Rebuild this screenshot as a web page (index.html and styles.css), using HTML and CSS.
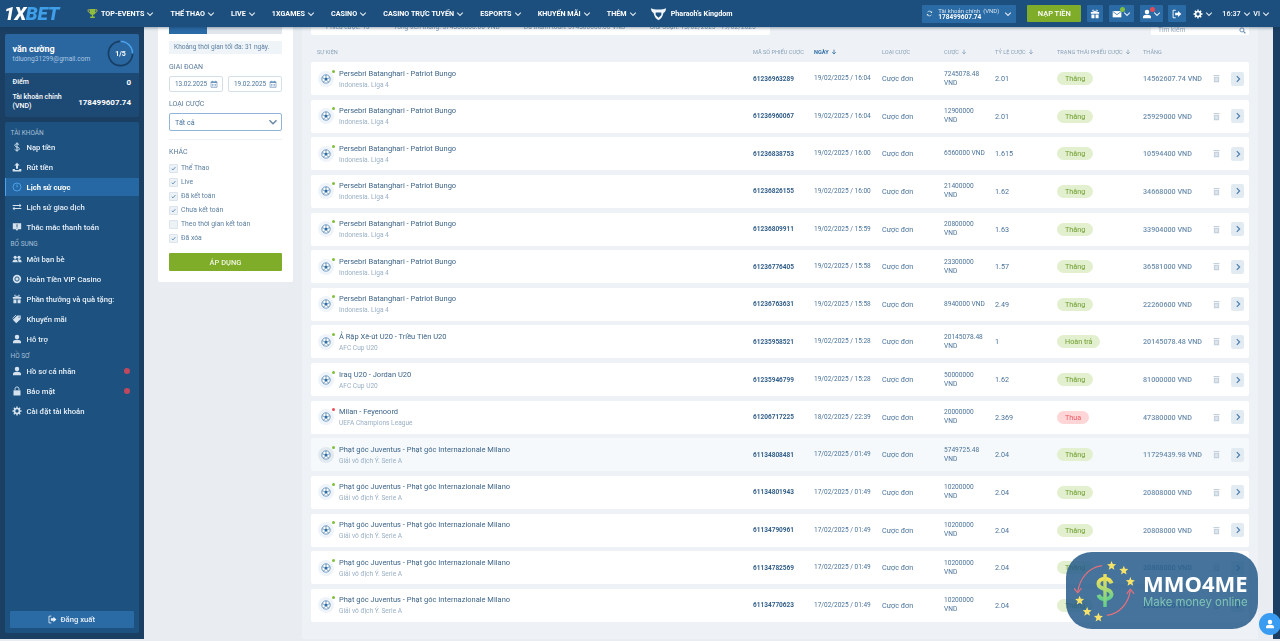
FILE: index.html
```html
<!DOCTYPE html>
<html lang="vi">
<head>
<meta charset="utf-8">
<title>1XBET - Lịch sử cược</title>
<link rel="stylesheet" href="styles.css">
</head>
<body>
<svg class="defs" width="0" height="0" aria-hidden="true">
  <symbol id="chev" viewBox="0 0 10 10"><path d="M1.5 3.2 5 6.8l3.5-3.6" fill="none" stroke="currentColor" stroke-width="1.4"/></symbol>
  <symbol id="dollar" viewBox="0 0 12 12"><path d="M8.6 3.4C8 2.500 7 2.100 6 2.100c-1.500 0-2.600.8-2.600 2 0 2.800 5.400 1.300 5.400 3.900 0 1.200-1.200 2-2.800 2-1.200 0-2.300-.5-2.900-1.500M6 .5v11" fill="none" stroke="currentColor" stroke-width="1.200"/></symbol>
  <symbol id="upload" viewBox="0 0 12 12"><path d="M6 .8 9.300 4.300H7.200V8H4.800V4.300H2.700zM.8 8.500h2.700v1h5V8.500h2.700v2.800H.8z" fill="currentColor"/></symbol>
  <symbol id="clock" viewBox="0 0 12 12"><circle cx="6" cy="6" r="4.800" fill="none" stroke="currentColor" stroke-width="1.100"/><path d="M6 3v3.500" stroke="currentColor" stroke-width="1.200"/></symbol>
  <symbol id="swap" viewBox="0 0 12 12"><path d="M.8 3.500h8.200V1.800L11.300 4.200 9 6.500V4.800H.8zM11.200 8.500H3v1.700L.7 7.800 3 5.500v1.700h8.200z" fill="currentColor"/></symbol>
  <symbol id="ask" viewBox="0 0 12 12"><path d="M1 1.500h10v7.200H7.500L6 10.800 4.500 8.700H1z" fill="currentColor"/><path d="M6 2.800v3M6 6.700v1" stroke="#1d5280" stroke-width="1.100"/></symbol>
  <symbol id="users" viewBox="0 0 12 12"><circle cx="3.800" cy="4" r="1.900" fill="currentColor"/><circle cx="8.400" cy="4" r="1.900" fill="currentColor"/><path d="M.6 10c0-2.500 1.300-3.500 3.200-3.500S7 7.500 7 10zM7.800 10c0-1.500-.3-2.600-1-3.300.5-.2 1-.3 1.600-.3 1.900 0 3.100 1 3.100 3.600z" fill="currentColor"/></symbol>
  <symbol id="coin" viewBox="0 0 12 12"><circle cx="6" cy="6" r="5" fill="currentColor"/><circle cx="6" cy="6" r="2.500" fill="none" stroke="#1d5280" stroke-width="1.100"/></symbol>
  <symbol id="gift" viewBox="0 0 12 12"><path d="M1 3.500h10v2.200H1zM1.700 6.500h3.600v4.700H1.700zM6.700 6.500h3.600v4.700H6.700zM5.300 3.500h1.400v2.200H5.300z" fill="currentColor"/><path d="M6 3.300C4.500.8 2.800 1 3 2.300c.2 1 1.800 1 3 1zm0 0c1.500-2.500 3.200-2.300 3-1-.2 1-1.800 1-3 1z" fill="none" stroke="currentColor"/></symbol>
  <symbol id="tag" viewBox="0 0 12 12"><path d="M6.200 1.800h4.200V6l-5.300 5L1 7z" fill="currentColor"/><path d="M4.800 1.200.6 5.300" stroke="currentColor"/><circle cx="8.500" cy="3.700" r=".8" fill="#1d5280"/></symbol>
  <symbol id="user" viewBox="0 0 12 12"><circle cx="6" cy="3.500" r="2.700" fill="currentColor"/><path d="M1.200 11.200V9.500c0-1.800 1.800-2.700 4.800-2.700s4.800.9 4.800 2.700v1.700z" fill="currentColor"/></symbol>
  <symbol id="lock" viewBox="0 0 12 12"><path d="M1.800 5.200h8.400v6.200H1.800z" fill="currentColor"/><path d="M3.600 5.200V3.500a2.400 2.400 0 0 1 4.800 0v1.700" fill="none" stroke="currentColor" stroke-width="1.100"/></symbol>
  <symbol id="gear" viewBox="0 0 12 12"><circle cx="6" cy="6" r="3" fill="none" stroke="currentColor" stroke-width="2"/><path d="M6 .6v2M6 9.400v2M.6 6h2M9.400 6h2M2.200 2.200l1.400 1.400M8.400 8.400l1.400 1.400M2.200 9.800l1.400-1.400M8.400 3.600l1.400-1.400" stroke="currentColor" stroke-width="1.700"/></symbol>
  <symbol id="logout" viewBox="0 0 12 12"><path d="M4.500 1.500H1.300v9h3.200" fill="none" stroke="currentColor" stroke-width="1.100"/><path d="M3.800 4.400h3.400V2.300L11.200 6 7.200 9.700V7.600H3.800z" fill="currentColor"/></symbol>
  <symbol id="trash" viewBox="0 0 12 12"><path d="M2 1.300h8v1.500H2zM2.500 3.500h7v7.500h-7z" fill="currentColor"/><path d="M4.500 5v4.500M6 5v4.500M7.500 5v4.500" stroke="#fff" stroke-width=".6"/></symbol>
  <symbol id="next" viewBox="0 0 10 10"><path d="M3.500 1.500 7 5 3.500 8.500" fill="none" stroke="currentColor" stroke-width="1.500"/></symbol>
  <symbol id="ball" viewBox="0 0 12 12"><circle cx="6" cy="6" r="5" fill="#fff" stroke="#2f6da6" stroke-width=".8"/><path d="M6 3.800 8.100 5.300 7.300 7.800H4.700L3.900 5.300z" fill="#2f6da6"/><path d="M6 1v2.800M1.500 4.600l2.400.7M10.500 4.600l-2.400.7M3 10l1.700-2.200M9 10 7.300 7.800" stroke="#2f6da6" stroke-width=".8"/></symbol>
  <symbol id="cal" viewBox="0 0 12 12"><path d="M1.500 2.500h9v8.500h-9z" fill="none" stroke="currentColor"/><path d="M1.500 2.500h9v2h-9zM3.200 1h1v2h-1zM7.800 1h1v2h-1z" fill="currentColor"/><path d="M3 6h1.500v1H3zM5.300 6h1.500v1H5.300zM7.600 6h1.500v1H7.600zM3 8.200h1.500v1H3zM5.300 8.200h1.500v1H5.300zM7.600 8.200h1.500v1H7.600z" fill="currentColor"/></symbol>
  <symbol id="tick" viewBox="0 0 10 10"><path d="M2.500 5.300 4.300 7l3.400-4" fill="none" stroke="#2f6da6" stroke-width="1"/></symbol>
  <symbol id="search" viewBox="0 0 12 12"><circle cx="5" cy="5" r="3.500" fill="none" stroke="currentColor" stroke-width="1.500"/><path d="m7.600 7.600 3.400 3.400" stroke="currentColor" stroke-width="1.800"/></symbol>
  <symbol id="refresh" viewBox="0 0 12 12"><path d="M9.800 4.500A4 4 0 0 0 2.500 4M2.200 7.500A4 4 0 0 0 9.500 8" fill="none" stroke="currentColor" stroke-width="1.100"/><path d="m10.500 2-.2 3-2.800-.6zM1.500 10l.2-3 2.800.6z" fill="currentColor"/></symbol>
  <symbol id="down" viewBox="0 0 10 10"><path d="M5 1v7M2 5.200 5 8.400l3-3.200" fill="none" stroke="currentColor" stroke-width="1.300"/></symbol>
  <symbol id="mail" viewBox="0 0 12 12"><path d="M.8 2.500h10.400v7.500H.8z" fill="currentColor"/><path d="M1 3 6 6.800 11 3" fill="none" stroke="#2a6aa5" stroke-width=".9"/></symbol>
  <symbol id="trophy" viewBox="0 0 12 12"><path d="M3 1h6v3.500a3 3 0 0 1-6 0zM5.300 7.200h1.400v2H5.300zM3.500 9.300h5v1.700h-5z" fill="#8fbf3a"/><path d="M3 2H1c0 2 .8 3 2.300 3.300M9 2h2c0 2-.8 3-2.300 3.300" fill="none" stroke="#d6c84a" stroke-width=".8"/></symbol>
  <symbol id="pharaoh" viewBox="0 0 18 14"><path d="M1 1c2 .8 3.300 1.300 8 1.300S15 1.800 17 1c-.2 2.600-1 4-2.800 5-.6 3.500-2.500 6.500-5.200 7.500C6.300 12.500 4.400 9.500 3.800 6 2 5 1.200 3.600 1 1z" fill="#f2f6fa"/><path d="M6 5.500h6v2.500L9 11 6 8z" fill="#1c4f7e"/></symbol>
  <symbol id="star" viewBox="0 0 10 10"><path d="m5 0 1.300 3.300 3.500.3-2.700 2.300.9 3.500L5 7.500 2 9.400l.9-3.500L.2 3.600l3.500-.3z" fill="#f7e36a"/></symbol>
</svg>

<div class="app">
  <header class="topbar">
    <a class="logo"><span>1X</span><b>BET</b></a>
    <nav class="nav">
      <a class="nav-item"><svg class="ic-trophy"><use href="#trophy"/></svg>TOP-EVENTS<svg class="chev"><use href="#chev"/></svg></a>
      <a class="nav-item">THỂ THAO<svg class="chev"><use href="#chev"/></svg></a>
      <a class="nav-item">LIVE<svg class="chev"><use href="#chev"/></svg></a>
      <a class="nav-item">1XGAMES<svg class="chev"><use href="#chev"/></svg></a>
      <a class="nav-item">CASINO<svg class="chev"><use href="#chev"/></svg></a>
      <a class="nav-item">CASINO TRỰC TUYẾN<svg class="chev"><use href="#chev"/></svg></a>
      <a class="nav-item">ESPORTS<svg class="chev"><use href="#chev"/></svg></a>
      <a class="nav-item">KHUYẾN MÃI<svg class="chev"><use href="#chev"/></svg></a>
      <a class="nav-item">THÊM<svg class="chev"><use href="#chev"/></svg></a>
    </nav>
    <a class="promo"><svg class="ic-pharaoh"><use href="#pharaoh"/></svg>Pharaoh's Kingdom</a>
    <div class="tools">
      <div class="wallet">
        <svg class="ic-sm"><use href="#refresh"/></svg>
        <div class="wallet-text"><span>Tài khoản chính&nbsp; (VND)</span><b>178499607.74</b></div>
        <svg class="chev"><use href="#chev"/></svg>
      </div>
      <a class="deposit">NẠP TIỀN</a>
      <a class="tool tool-gift"><svg class="ic-md"><use href="#gift"/></svg></a>
      <a class="tool tool-mail"><svg class="ic-md"><use href="#mail"/></svg><i class="badge-green"></i><svg class="chev"><use href="#chev"/></svg></a>
      <a class="tool tool-user"><svg class="ic-md"><use href="#user"/></svg><i class="badge-red"></i><svg class="chev"><use href="#chev"/></svg></a>
      <a class="tool tool-out"><svg class="ic-md"><use href="#logout"/></svg></a>
      <a class="plain plain-gear"><svg class="ic-md"><use href="#gear"/></svg><svg class="chev"><use href="#chev"/></svg></a>
      <a class="plain plain-time">16:37<svg class="chev"><use href="#chev"/></svg></a>
      <a class="plain plain-lang">VI<svg class="chev"><use href="#chev"/></svg></a>
    </div>
  </header>

  <div class="body">
    <aside class="sidebar">
      <section class="profile">
        <div class="profile-top">
          <div><div class="pname">văn cường</div><div class="pmail">tdluong31299@gmail.com</div></div>
          <div class="ring"><svg viewBox="0 0 28 28"><circle cx="14" cy="14" r="12.500" fill="none" stroke="#173f66" stroke-width="1.800"/><path d="M14 1.500A12.500 12.500 0 0 1 26.500 14" fill="none" stroke="#4aa3ee" stroke-width="1.800"/></svg><span>1/5</span></div>
        </div>
        <div class="profile-bottom">
          <div class="pline pline-a"><span>Điểm</span><b>0</b></div>
          <div class="pline"><span>Tài khoản chính<br>(VND)</span><b>178499607.74</b></div>
        </div>
      </section>
      <section class="menu">
        <div class="menu-title">TÀI KHOẢN</div>
        <a class="mi"><svg><use href="#dollar"/></svg>Nạp tiền</a>
        <a class="mi"><svg><use href="#upload"/></svg>Rút tiền</a>
        <a class="mi mi-active"><svg><use href="#clock"/></svg>Lịch sử cược</a>
        <a class="mi"><svg><use href="#swap"/></svg>Lịch sử giao dịch</a>
        <a class="mi"><svg><use href="#ask"/></svg>Thắc mắc thanh toán</a>
        <div class="menu-title menu-title-b">BỔ SUNG</div>
        <a class="mi"><svg><use href="#users"/></svg>Mời bạn bè</a>
        <a class="mi"><svg><use href="#coin"/></svg>Hoàn Tiền VIP Casino</a>
        <a class="mi"><svg><use href="#gift"/></svg>Phần thưởng và quà tặng:</a>
        <a class="mi"><svg><use href="#tag"/></svg>Khuyến mãi</a>
        <a class="mi"><svg><use href="#user"/></svg>Hỗ trợ</a>
        <div class="menu-title menu-title-b">HỒ SƠ</div>
        <a class="mi"><svg><use href="#user"/></svg>Hồ sơ cá nhân<i class="alert"></i></a>
        <a class="mi"><svg><use href="#lock"/></svg>Bảo mật<i class="alert"></i></a>
        <a class="mi"><svg><use href="#gear"/></svg>Cài đặt tài khoản</a>
        <a class="signout"><svg><use href="#logout"/></svg>Đăng xuất</a>
      </section>
    </aside>

    <aside class="filters">
      <div class="tabs"><span class="tab tab-on"></span><span class="tab"></span><span class="tab"></span></div>
      <div class="note">Khoảng thời gian tối đa: 31 ngày.</div>
      <div class="flabel">GIAI ĐOẠN</div>
      <div class="dates">
        <div class="date">13.02.2025<svg><use href="#cal"/></svg></div>
        <div class="date">19.02.2025<svg><use href="#cal"/></svg></div>
      </div>
      <div class="flabel flabel-b">LOẠI CƯỢC</div>
      <div class="select">Tất cả<svg class="chev"><use href="#chev"/></svg></div>
      <div class="fdivider"></div>
      <div class="flabel">KHÁC</div>
      <div class="checks">
        <div class="check"><span class="box"><svg><use href="#tick"/></svg></span>Thể Thao</div>
        <div class="check"><span class="box"><svg><use href="#tick"/></svg></span>Live</div>
        <div class="check"><span class="box"><svg><use href="#tick"/></svg></span>Đã kết toán</div>
        <div class="check"><span class="box"><svg><use href="#tick"/></svg></span>Chưa kết toán</div>
        <div class="check"><span class="box"></span>Theo thời gian kết toán</div>
        <div class="check"><span class="box"><svg><use href="#tick"/></svg></span>Đã xóa</div>
      </div>
      <a class="apply">ÁP DỤNG</a>
    </aside>

    <main class="main">
      <div class="stats">
        <div class="statbar">
          <span>Phiếu cược: 15</span><span>Tổng tiền thắng: 574300000.00 VND</span><span>Đã thanh toán: 574300000.00 VND</span><span>Giai đoạn: 13/02/2025 - 19/02/2025</span>
        </div>
        <div class="searchbox">Tìm kiếm<svg><use href="#search"/></svg></div>
      </div>
      <div class="thead">
        <span>SỰ KIỆN</span>
        <span>MÃ SỐ PHIẾU CƯỢC</span>
        <span class="th-on">NGÀY<svg><use href="#down"/></svg></span>
        <span>LOẠI CƯỢC</span>
        <span>CƯỢC<svg><use href="#down"/></svg></span>
        <span>TỶ LỆ CƯỢC<svg><use href="#down"/></svg></span>
        <span>TRẠNG THÁI PHIẾU CƯỢC<svg><use href="#down"/></svg></span>
        <span>THẮNG</span>
      </div>

      <div class="row"><div class="ev"><span class="ball"><svg><use href="#ball"/></svg><i class="dot"></i></span><div><div class="ev-name">Persebri Batanghari - Patriot Bungo</div><div class="ev-league">Indonesia. Liga 4</div></div></div><b class="rid">61236963289</b><span class="rdate">19/02/2025 / 16:04</span><span class="rt">Cược đơn</span><span class="rbet">7245078.48 VND</span><span class="rt">2.01</span><div class="st"><span class="pill">Thắng</span></div><span class="win">14562607.74 VND</span><svg class="trash"><use href="#trash"/></svg><a class="go"><svg><use href="#next"/></svg></a></div>
      <div class="row"><div class="ev"><span class="ball"><svg><use href="#ball"/></svg><i class="dot"></i></span><div><div class="ev-name">Persebri Batanghari - Patriot Bungo</div><div class="ev-league">Indonesia. Liga 4</div></div></div><b class="rid">61236960067</b><span class="rdate">19/02/2025 / 16:04</span><span class="rt">Cược đơn</span><span class="rbet">12900000 VND</span><span class="rt">2.01</span><div class="st"><span class="pill">Thắng</span></div><span class="win">25929000 VND</span><svg class="trash"><use href="#trash"/></svg><a class="go"><svg><use href="#next"/></svg></a></div>
      <div class="row"><div class="ev"><span class="ball"><svg><use href="#ball"/></svg><i class="dot"></i></span><div><div class="ev-name">Persebri Batanghari - Patriot Bungo</div><div class="ev-league">Indonesia. Liga 4</div></div></div><b class="rid">61236838753</b><span class="rdate">19/02/2025 / 16:00</span><span class="rt">Cược đơn</span><span class="rbet">6560000 VND</span><span class="rt">1.615</span><div class="st"><span class="pill">Thắng</span></div><span class="win">10594400 VND</span><svg class="trash"><use href="#trash"/></svg><a class="go"><svg><use href="#next"/></svg></a></div>
      <div class="row"><div class="ev"><span class="ball"><svg><use href="#ball"/></svg><i class="dot"></i></span><div><div class="ev-name">Persebri Batanghari - Patriot Bungo</div><div class="ev-league">Indonesia. Liga 4</div></div></div><b class="rid">61236826155</b><span class="rdate">19/02/2025 / 16:00</span><span class="rt">Cược đơn</span><span class="rbet">21400000 VND</span><span class="rt">1.62</span><div class="st"><span class="pill">Thắng</span></div><span class="win">34668000 VND</span><svg class="trash"><use href="#trash"/></svg><a class="go"><svg><use href="#next"/></svg></a></div>
      <div class="row"><div class="ev"><span class="ball"><svg><use href="#ball"/></svg><i class="dot"></i></span><div><div class="ev-name">Persebri Batanghari - Patriot Bungo</div><div class="ev-league">Indonesia. Liga 4</div></div></div><b class="rid">61236809911</b><span class="rdate">19/02/2025 / 15:59</span><span class="rt">Cược đơn</span><span class="rbet">20800000 VND</span><span class="rt">1.63</span><div class="st"><span class="pill">Thắng</span></div><span class="win">33904000 VND</span><svg class="trash"><use href="#trash"/></svg><a class="go"><svg><use href="#next"/></svg></a></div>
      <div class="row"><div class="ev"><span class="ball"><svg><use href="#ball"/></svg><i class="dot"></i></span><div><div class="ev-name">Persebri Batanghari - Patriot Bungo</div><div class="ev-league">Indonesia. Liga 4</div></div></div><b class="rid">61236776405</b><span class="rdate">19/02/2025 / 15:58</span><span class="rt">Cược đơn</span><span class="rbet">23300000 VND</span><span class="rt">1.57</span><div class="st"><span class="pill">Thắng</span></div><span class="win">36581000 VND</span><svg class="trash"><use href="#trash"/></svg><a class="go"><svg><use href="#next"/></svg></a></div>
      <div class="row"><div class="ev"><span class="ball"><svg><use href="#ball"/></svg><i class="dot"></i></span><div><div class="ev-name">Persebri Batanghari - Patriot Bungo</div><div class="ev-league">Indonesia. Liga 4</div></div></div><b class="rid">61236763631</b><span class="rdate">19/02/2025 / 15:58</span><span class="rt">Cược đơn</span><span class="rbet">8940000 VND</span><span class="rt">2.49</span><div class="st"><span class="pill">Thắng</span></div><span class="win">22260600 VND</span><svg class="trash"><use href="#trash"/></svg><a class="go"><svg><use href="#next"/></svg></a></div>
      <div class="row"><div class="ev"><span class="ball"><svg><use href="#ball"/></svg><i class="dot"></i></span><div><div class="ev-name">Ả Rập Xê-út U20 - Triều Tiên U20</div><div class="ev-league">AFC Cup U20</div></div></div><b class="rid">61235958521</b><span class="rdate">19/02/2025 / 15:28</span><span class="rt">Cược đơn</span><span class="rbet">20145078.48 VND</span><span class="rt">1</span><div class="st"><span class="pill">Hoàn trả</span></div><span class="win">20145078.48 VND</span><svg class="trash"><use href="#trash"/></svg><a class="go"><svg><use href="#next"/></svg></a></div>
      <div class="row"><div class="ev"><span class="ball"><svg><use href="#ball"/></svg><i class="dot"></i></span><div><div class="ev-name">Iraq U20 - Jordan U20</div><div class="ev-league">AFC Cup U20</div></div></div><b class="rid">61235946799</b><span class="rdate">19/02/2025 / 15:28</span><span class="rt">Cược đơn</span><span class="rbet">50000000 VND</span><span class="rt">1.62</span><div class="st"><span class="pill">Thắng</span></div><span class="win">81000000 VND</span><svg class="trash"><use href="#trash"/></svg><a class="go"><svg><use href="#next"/></svg></a></div>
      <div class="row"><div class="ev"><span class="ball"><svg><use href="#ball"/></svg><i class="dot dot-red"></i></span><div><div class="ev-name">Milan - Feyenoord</div><div class="ev-league">UEFA Champions League</div></div></div><b class="rid">61206717225</b><span class="rdate">18/02/2025 / 22:39</span><span class="rt">Cược đơn</span><span class="rbet">20000000 VND</span><span class="rt">2.369</span><div class="st"><span class="pill pill-lose">Thua</span></div><span class="win">47380000 VND</span><svg class="trash"><use href="#trash"/></svg><a class="go"><svg><use href="#next"/></svg></a></div>
      <div class="row row-hover"><div class="ev"><span class="ball"><svg><use href="#ball"/></svg><i class="dot"></i></span><div><div class="ev-name">Phạt góc Juventus - Phạt góc Internazionale Milano</div><div class="ev-league">Giải vô địch Ý. Serie A</div></div></div><b class="rid">61134808481</b><span class="rdate">17/02/2025 / 01:49</span><span class="rt">Cược đơn</span><span class="rbet">5749725.48 VND</span><span class="rt">2.04</span><div class="st"><span class="pill">Thắng</span></div><span class="win">11729439.98 VND</span><svg class="trash"><use href="#trash"/></svg><a class="go"><svg><use href="#next"/></svg></a></div>
      <div class="row"><div class="ev"><span class="ball"><svg><use href="#ball"/></svg><i class="dot"></i></span><div><div class="ev-name">Phạt góc Juventus - Phạt góc Internazionale Milano</div><div class="ev-league">Giải vô địch Ý. Serie A</div></div></div><b class="rid">61134801943</b><span class="rdate">17/02/2025 / 01:49</span><span class="rt">Cược đơn</span><span class="rbet">10200000 VND</span><span class="rt">2.04</span><div class="st"><span class="pill">Thắng</span></div><span class="win">20808000 VND</span><svg class="trash"><use href="#trash"/></svg><a class="go"><svg><use href="#next"/></svg></a></div>
      <div class="row"><div class="ev"><span class="ball"><svg><use href="#ball"/></svg><i class="dot"></i></span><div><div class="ev-name">Phạt góc Juventus - Phạt góc Internazionale Milano</div><div class="ev-league">Giải vô địch Ý. Serie A</div></div></div><b class="rid">61134790961</b><span class="rdate">17/02/2025 / 01:49</span><span class="rt">Cược đơn</span><span class="rbet">10200000 VND</span><span class="rt">2.04</span><div class="st"><span class="pill">Thắng</span></div><span class="win">20808000 VND</span><svg class="trash"><use href="#trash"/></svg><a class="go"><svg><use href="#next"/></svg></a></div>
      <div class="row"><div class="ev"><span class="ball"><svg><use href="#ball"/></svg><i class="dot"></i></span><div><div class="ev-name">Phạt góc Juventus - Phạt góc Internazionale Milano</div><div class="ev-league">Giải vô địch Ý. Serie A</div></div></div><b class="rid">61134782569</b><span class="rdate">17/02/2025 / 01:49</span><span class="rt">Cược đơn</span><span class="rbet">10200000 VND</span><span class="rt">2.04</span><div class="st"><span class="pill">Thắng</span></div><span class="win">20808000 VND</span><svg class="trash"><use href="#trash"/></svg><a class="go"><svg><use href="#next"/></svg></a></div>
      <div class="row"><div class="ev"><span class="ball"><svg><use href="#ball"/></svg><i class="dot"></i></span><div><div class="ev-name">Phạt góc Juventus - Phạt góc Internazionale Milano</div><div class="ev-league">Giải vô địch Ý. Serie A</div></div></div><b class="rid">61134770623</b><span class="rdate">17/02/2025 / 01:49</span><span class="rt">Cược đơn</span><span class="rbet">10200000 VND</span><span class="rt">2.04</span><div class="st"><span class="pill">Thắng</span></div><span class="win">20808000 VND</span><svg class="trash"><use href="#trash"/></svg><a class="go"><svg><use href="#next"/></svg></a></div>
    </main>
    <div class="edge"></div>
  </div>

  <aside class="watermark">
    <svg class="wm-art" viewBox="0 0 66 66">
      <defs><linearGradient id="wmg" x1="0" y1="0" x2="0" y2="1"><stop offset="0" stop-color="#f3e05a"/><stop offset="1" stop-color="#63d08c"/></linearGradient></defs>
      <path d="M30 6C15 8 6 20 4 34" fill="none" stroke="#e2707c" stroke-width="1.300"/><path d="m0 30 4 5 4-5" fill="none" stroke="#e2707c" stroke-width="1.300"/>
      <path d="M35 59c14-2 23-13 25-27" fill="none" stroke="#e2707c" stroke-width="1.300"/><path d="m56 36 4-5 4 5" fill="none" stroke="#e2707c" stroke-width="1.300"/>
      <path d="M40 25c-1-3-4-5-7-5-4 0-7 2-7 5.500 0 7 14 4 14 11 0 3-3 5-7 5-3 0-6-1.500-7-4.500" fill="none" stroke="url(#wmg)" stroke-width="4.200"/><rect x="31.200" y="15" width="3.600" height="35" fill="url(#wmg)"/>
      <use href="#star" x="35" y="1" width="10" height="10"/><use href="#star" x="48" y="6" width="10" height="10"/><use href="#star" x="55" y="18" width="10" height="10"/><use href="#star" x="1" y="38" width="10" height="10"/><use href="#star" x="9" y="50" width="10" height="10"/><use href="#star" x="21" y="56" width="10" height="10"/>
    </svg>
    <div class="wm-text"><div class="wm-title">MMO4ME</div><div class="wm-sub">Make money online</div></div>
  </aside>
  <a class="chat"><svg><use href="#user"/></svg></a>
</div>
</body>
</html>
```
FILE: styles.css
```css
* { box-sizing: border-box; }
html, body { margin: 0; height: 641px; overflow: hidden; }
body { font-family: Roboto, "Noto Sans", sans-serif; color: #4b739a; background: #e9edf2; }
a { color: inherit; text-decoration: none; }
svg { display: block; flex: none; }
.defs { position: absolute; }

.app { position: relative; height: 639px; display: flex; flex-direction: column; overflow: hidden; filter: blur(.35px); }

/* top bar */
.topbar { position: relative; z-index: 5; flex: none; height: 27px; display: flex; align-items: center; padding-left: 4px; color: #fff; background: #1c4f7e; box-shadow: 0 1px 3px rgba(20,50,80,.45); }
.logo { width: 83px; font-size: 19px; font-weight: 900; font-style: italic; letter-spacing: -.3px; }
.logo span { color: #fff; }
.logo b { color: #3f9fe8; font-weight: 900; }
.nav { display: flex; align-items: center; gap: 16.100px; }
.nav-item { display: flex; align-items: center; font-size: 7.200px; font-weight: 700; white-space: nowrap; }
.chev { width: 8px; height: 8px; margin-left: 2px; opacity: .85; }
.ic-trophy { width: 11px; height: 11px; margin-right: 3px; }
.promo { display: flex; align-items: center; margin-left: 13px; font-size: 7.200px; font-weight: 700; }
.ic-pharaoh { width: 17px; height: 14px; margin-right: 4px; }
.tools { display: flex; align-items: center; margin-left: auto; height: 100%; padding-right: 10px; }
.wallet { display: flex; align-items: center; width: 94px; height: 18px; padding: 0 4px; background: #2a6aa5; border-radius: 1px; }
.ic-sm { width: 7px; height: 7px; margin-right: 5px; }
.wallet-text { display: flex; flex-direction: column; flex: 1; font-size: 6px; line-height: 7px; }
.wallet-text span { opacity: .8; }
.wallet-text b { font-size: 6.500px; }
.deposit { display: flex; align-items: center; justify-content: center; width: 54px; height: 17px; margin-left: 11px; font-size: 7.500px; font-weight: 500; background: #7fad2a; border-radius: 1px; }
.tool { position: relative; display: flex; align-items: center; justify-content: center; height: 17px; margin-left: 6px; background: #2a6aa5; border-radius: 1px; }
.tool-gift { width: 16px; }
.tool-mail { width: 25px; }
.tool-user { width: 23px; }
.tool-out { width: 18px; margin-left: 5px; }
.ic-md { width: 10px; height: 10px; }
.tool .chev { margin-left: 1px; }
.badge-green, .badge-red { position: absolute; top: 2px; left: 11px; width: 5px; height: 5px; border-radius: 50%; background: #7fbf3a; }
.badge-red { background: #e64a55; left: 10px; }
.plain { display: flex; align-items: center; font-size: 7.200px; font-weight: 500; }
.plain-gear { margin-left: 7px; width: 22px; }
.plain-time { margin-left: 7px; width: 24px; }
.plain-lang { margin-left: 7px; }

/* layout */
.body { flex: 1; min-height: 0; display: flex; }

/* sidebar */
.sidebar { flex: none; width: 144px; padding: 7px 5px 6px 4.500px; display: flex; flex-direction: column; gap: 5px; background: #1a3f63; }
.profile { flex: none; color: #fff; border-radius: 2px; overflow: hidden; }
.profile-top { display: flex; align-items: center; justify-content: space-between; height: 39px; padding: 0 5px 0 8px; background: #2a66a0; }
.pname { font-size: 9px; font-weight: 700; line-height: 12px; }
.pmail { font-size: 6.600px; line-height: 9px; color: #a9c6e2; }
.ring { position: relative; width: 27px; height: 27px; }
.ring svg { width: 100%; height: 100%; }
.ring span { position: absolute; inset: 0; display: flex; align-items: center; justify-content: center; font-size: 7px; font-weight: 700; }
.profile-bottom { height: 44px; padding: 4px 8px 0; background: #1c4a75; }
.pline { display: flex; align-items: center; justify-content: space-between; font-size: 7px; line-height: 9px; font-weight: 500; }
.pline b { font-size: 8px; font-weight: 700; }
.pline-a { height: 10px; margin-bottom: 6px; }

.menu { flex: 1; min-height: 0; display: flex; flex-direction: column; padding-top: 7px; color: #e6eef6; background: #1d5280; border-radius: 2px; }
.menu-title { flex: none; height: 8px; padding-left: 6px; font-size: 6.500px; line-height: 8px; color: #a6bfd6; }
.menu-title-b { height: 12px; padding-top: 3px; }
.mi { position: relative; display: flex; align-items: center; flex: none; height: 20px; padding-left: 7px; font-size: 7.700px; font-weight: 500; }
.mi svg { width: 10px; height: 10px; margin-right: 5px; color: #d5e2ee; }
.mi-active { color: #fff; font-weight: 700; background: linear-gradient(#2568a3, #2568a3) 0 1px / 100% 18px no-repeat; }
.mi-active::before { content: ""; position: absolute; left: 0; top: 1px; bottom: 1px; width: 1px; background: #4aa3ee; }
.mi-active svg { color: #4aa3ee; }
.alert { margin-left: auto; margin-right: 9px; width: 6px; height: 6px; border-radius: 50%; background: #c0485c; }
.signout { display: flex; align-items: center; justify-content: center; flex: none; height: 17px; margin: auto 5px 5px; font-size: 7.700px; font-weight: 500; color: #e8f0f7; background: #2a6aa5; border-radius: 1px; }
.signout svg { width: 9px; height: 9px; margin-right: 3px; }

/* filter column */
.filters { flex: none; align-self: flex-start; width: 135px; height: 255px; margin-left: 14px; padding: 0 11px; background: #fff; border-radius: 0 0 2px 2px; }
.tabs { display: flex; height: 7px; margin-bottom: 7px; }
.tab { flex: 1; background: #e0e6ec; }
.tab-on { background: #2a6aa5; }
.note { height: 13px; padding-left: 5px; font-size: 6.600px; line-height: 13px; background: #eff4f8; color: #5d80a2; }
.flabel { margin-top: 9px; font-size: 7px; line-height: 8px; color: #59799a; }
.flabel-b { margin-top: 8px; }
.dates { display: flex; justify-content: space-between; margin-top: 5px; }
.date { display: flex; align-items: center; justify-content: space-between; width: 54px; height: 16px; padding: 0 4px 0 5px; font-size: 6.400px; color: #4b739a; border: 1px solid #d5dfe8; border-radius: 2px; }
.date svg { width: 8px; height: 8px; color: #6c93ba; }
.select { display: flex; align-items: center; justify-content: space-between; height: 18px; margin-top: 5px; padding: 0 3px 0 5px; font-size: 7.200px; color: #4b739a; border: 1px solid #8fb4d8; border-radius: 2px; }
.select .chev { width: 10px; height: 10px; }
.fdivider { height: 1px; margin-top: 8px; background: #eef2f6; }
.fdivider + .flabel { margin-top: 8px; }
.checks { display: flex; flex-direction: column; gap: 6px; margin-top: 8px; }
.check { display: flex; align-items: center; height: 8px; font-size: 6.800px; color: #5d80a2; }
.box { width: 9px; height: 9px; margin-right: 3px; background: #edf2f6; border: 1px solid #dbe4ec; border-radius: 1px; }
.box svg { width: 7px; height: 7px; }
.apply { display: flex; align-items: center; justify-content: center; height: 18px; margin-top: 11px; font-size: 7.500px; font-weight: 500; color: #eef5df; background: #7fad2a; border-radius: 1px; }

/* main */
.main { flex: none; width: 956px; margin-left: 9px; padding: 0 9px; background: #eef1f5; }
.stats { display: flex; justify-content: space-between; height: 8px; overflow: hidden; }
.statbar { display: flex; align-items: flex-end; gap: 24px; width: 459px; padding: 0 0 4px 15px; font-size: 6.600px; line-height: 7px; color: #7a96b0; background: #fff; border-radius: 0 0 2px 2px; white-space: nowrap; overflow: hidden; }
.searchbox { display: flex; align-items: flex-end; justify-content: space-between; width: 98px; padding: 0 3px 1px 7px; font-size: 6.600px; line-height: 7px; color: #9cb0c3; background: #fff; }
.searchbox svg { width: 7px; height: 7px; color: #5d86ae; }
.thead, .row { display: grid; grid-template-columns: 442px 61px 68px 62px 51px 62px 86px 69px 19px 13px; align-items: center; }
.thead { height: 27px; font-size: 5.600px; color: #8aa3ba; }
.thead span { display: flex; align-items: center; white-space: nowrap; padding-top: 6px; }
.thead span:first-child { padding-left: 6px; }
.thead svg { width: 6px; height: 6px; margin-left: 2px; }
.th-on { font-weight: 700; color: #2f6da6; }
.row { height: 33px; margin-bottom: 4.640px; background: #fff; border-radius: 2px; }
.row-hover { background: #f5f9fc; }
.ev { display: flex; align-items: center; padding-left: 7px; }
.ball { position: relative; display: flex; align-items: center; justify-content: center; width: 16px; height: 16px; margin-right: 5px; background: #eef4f9; border-radius: 50%; }
.row-hover .ball { background: #e2e9ef; }
.ball svg { width: 10px; height: 10px; }
.dot { position: absolute; top: -1px; right: -1px; width: 3px; height: 3px; border-radius: 50%; background: #7fbf3a; }
.dot-red { background: #ef4c57; }
.ev-name { font-size: 7.500px; line-height: 11px; color: #3e6589; }
.ev-league { margin-top: 2px; font-size: 6.600px; line-height: 9px; color: #9ab0c5; }
.rid { font-size: 6.500px; font-weight: 700; color: #34608a; }
.rt { font-size: 7.200px; line-height: 9px; color: #4b739a; }
.rdate { font-size: 6.500px; line-height: 9px; color: #4b739a; }
.rbet { padding-right: 7px; font-size: 6.600px; line-height: 9px; color: #4b739a; }
.st { display: flex; align-items: center; }
.pill { height: 13px; padding: 0 8px; font-size: 7.200px; line-height: 13px; color: #6f9d2e; background: #e2f0cf; border-radius: 7px; }
.pill-lose { color: #ec5a62; background: #ffd6d8; }
.win { font-size: 7.200px; font-weight: 500; color: #6e8fae; }
.trash { width: 9px; height: 9px; color: #c3d0dc; }
.go { display: flex; align-items: center; justify-content: center; height: 14px; background: #e3ebf2; border-radius: 2px; color: #4a7fae; }
.go svg { width: 8px; height: 8px; }
.edge { flex: 1; margin-left: 15px; background: #1a3f63; }

/* overlays */
.watermark { position: absolute; z-index: 6; left: 1066px; top: 552px; width: 192px; height: 77px; display: flex; align-items: center; padding-left: 8px; background: rgba(38,92,138,.86); border-radius: 26px; }
.wm-art { width: 62px; height: 66px; }
.wm-text { margin-left: 7px; }
.wm-title { font-family: "Open Sans", Inter, sans-serif; font-size: 22px; font-weight: 700; line-height: 23px; color: #fff; }
.wm-sub { font-family: Inter, "Open Sans", sans-serif; font-size: 11.400px; line-height: 14px; color: #7fc4b4; }
.chat { position: absolute; z-index: 7; left: 1259px; top: 613px; display: flex; align-items: center; justify-content: center; width: 22px; height: 22px; color: #fff; background: #3a9cf0; border-radius: 50%; }
.chat svg { width: 10px; height: 10px; }
```
